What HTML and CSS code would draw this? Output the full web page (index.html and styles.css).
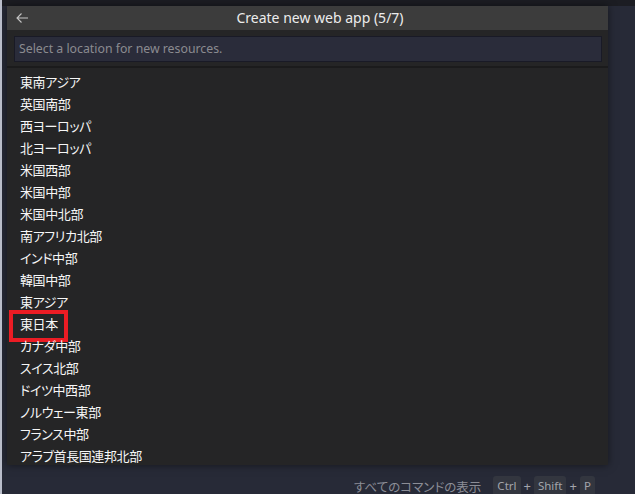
FILE: index.html
```html
<!DOCTYPE html>
<html lang="ja">
<head>
<meta charset="utf-8">
<title>Create new web app</title>
<link rel="stylesheet" href="styles.css">
</head>
<body>
<div class="topstrip"></div>
<div class="panel">
  <div class="titlebar">
    <svg class="back" width="16" height="16" viewBox="0 0 16 16"><path d="M14 8H3M7.5 3.5 3 8l4.5 4.5" fill="none" stroke="#c5c5c5" stroke-width="1.1"/></svg>
    <span class="title">Create new web app (5/7)</span>
  </div>
  <div class="inputwrap">
    <div class="input">Select a location for new resources.</div>
  </div>
  <div class="sep"></div>
  <ul class="list">
    <li>東南アジア</li>
    <li>英国南部</li>
    <li>西ヨーロッパ</li>
    <li>北ヨーロッパ</li>
    <li>米国西部</li>
    <li>米国中部</li>
    <li>米国中北部</li>
    <li>南アフリカ北部</li>
    <li>インド中部</li>
    <li>韓国中部</li>
    <li>東アジア</li>
    <li class="marked">東日本<span class="redbox"></span></li>
    <li>カナダ中部</li>
    <li>スイス北部</li>
    <li>ドイツ中西部</li>
    <li>ノルウェー東部</li>
    <li>フランス中部</li>
    <li>アラブ首長国連邦北部</li>
  </ul>
</div>
<div class="footer">
  <span class="label">すべてのコマンドの表示</span>
  <span class="key">Ctrl</span><span class="plus">+</span><span class="key">Shift</span><span class="plus">+</span><span class="key">P</span>
</div>
</body>
</html>
```
FILE: styles.css
```css
html, body {
  margin: 0;
  padding: 0;
}
body {
  width: 635px;
  height: 494px;
  overflow: hidden;
  background: #272a37;
  border-left: 2px solid #b9bdca;
  box-sizing: border-box;
  font-family: "Noto Sans", "Noto Sans CJK JP", sans-serif;
  display: flex;
  flex-direction: column;
}
.topstrip {
  height: 6px;
  background: #1c1d23;
  flex: none;
}
.panel {
  margin-left: 5px;
  width: 601px;
  height: 459px;
  background: #252526;
  overflow: hidden;
  flex: none;
  box-shadow: 0 0 8px rgba(0,0,0,0.5);
}
.titlebar {
  height: 24px;
  background: #3c3c3c;
  display: flex;
  align-items: center;
  position: relative;
}
.back {
  position: absolute;
  left: 7px;
  top: 4px;
}
.title {
  flex: 1;
  text-align: center;
  padding-left: 25px;
  color: #ececec;
  font-size: 14px;
  line-height: 24px;
}
.inputwrap {
  padding: 6px 6px 4px 7px;
}
.input {
  height: 24px;
  border: 1px solid #191a26;
  background: #2a2c3a;
  color: #8a8b90;
  font-size: 12.3px;
  line-height: 24px;
  padding-left: 4px;
}
.sep {
  height: 2px;
  background: #1b1b1c;
}
.list {
  list-style: none;
  margin: 0;
  padding: 3px 0 0 0;
}
.list li {
  height: 22px;
  line-height: 22px;
  padding-left: 13px;
  color: #f6f6f6;
  font-family: "Noto Sans CJK JP", sans-serif;
  font-size: 13px;
  font-feature-settings: "palt";
  letter-spacing: -0.4px;
  position: relative;
}
.redbox {
  position: absolute;
  left: 2px;
  top: -3px;
  width: 51px;
  height: 24px;
  border: 4px solid #ec1c24;
}
.footer {
  display: flex;
  align-items: center;
  margin-top: 11px;
  margin-left: 352px;
  height: 20px;
}
.label {
  color: #8b8d96;
  font-family: "Noto Sans CJK JP", sans-serif;
  font-size: 12.5px;
  font-feature-settings: "palt";
  margin-right: 12px;
}
.key {
  background: #33363f;
  color: #a3a5ab;
  font-size: 11.5px;
  padding: 0 4px;
  height: 20px;
  line-height: 20px;
  border-radius: 3px;
}
.plus {
  color: #a3a5ab;
  font-size: 13px;
  margin: 0 3px;
}
```
